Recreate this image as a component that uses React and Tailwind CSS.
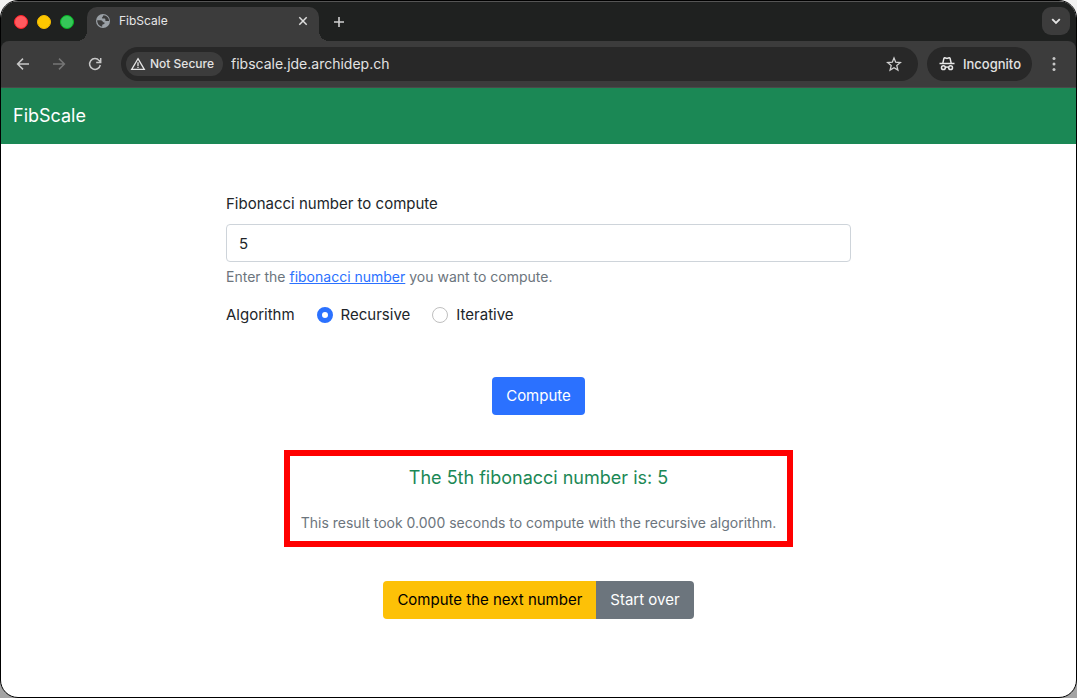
// src/App.jsx
import { useState } from 'react';

const ICON_BUTTON = 'flex items-center justify-center shrink-0 text-[#c7c7c7]';

function GlobeIcon() {
  return (
    <svg className="h-4 w-4 shrink-0" viewBox="0 0 16 16" fill="none">
      <circle cx="8" cy="8" r="7" fill="#9aa0a6" />
      <path d="M8.6 2.3c-.9.5-.4 1.5-1.3 2-.6.4-.2 1.3.5 1.3h1.8c.8 0 .9.9.7 1.4-.2.6.4 1 1.1 1h2.7a5.8 5.8 0 0 0-5.5-5.700z" fill="#3c3c3c" />
      <path d="M2.2 7.3h3.600c1.300 0 2.100 1 2.100 2h1c.8 0 1 1.300.2 1.600l-1.400.5c-.6.2-.5 1.200-.5 2.300a5.800 5.800 0 0 1-5-6.400z" fill="#3c3c3c" />
    </svg>
  );
}

function CloseIcon() {
  return (
    <svg className="h-4 w-4" viewBox="0 0 16 16" fill="none" stroke="#dedede" strokeWidth={1.5}>
      <path d="M4.3 4.3l7.4 7.4M11.7 4.3l-7.4 7.4" />
    </svg>
  );
}

function PlusIcon() {
  return (
    <svg className="h-4 w-4" viewBox="0 0 16 16" fill="none" stroke="#d0d0d0" strokeWidth={1.6}>
      <path d="M8 3v10M3 8h10" />
    </svg>
  );
}

function ChevronIcon() {
  return (
    <svg className="h-4 w-4" viewBox="0 0 16 16" fill="none" stroke="#e3e3e3" strokeWidth={1.9}>
      <path d="M4.2 6.2L8 10l3.8-3.8" />
    </svg>
  );
}

function ArrowIcon({ className }) {
  return (
    <svg className={className} viewBox="0 0 16 16" fill="none" stroke="currentColor" strokeWidth={1.5}>
      <path d="M14 8H3M8 2.6L2.6 8 8 13.4" />
    </svg>
  );
}

function ReloadIcon() {
  return (
    <svg className="h-4 w-4" viewBox="0 0 16 16" fill="none" stroke="currentColor" strokeWidth={1.5}>
      <path d="M13.3 9A5.4 5.4 0 1 1 12.2 4.6l1.3 1.5" />
      <path d="M13.700 2v4.500H9.200" />
    </svg>
  );
}

function WarningIcon() {
  return (
    <svg className="h-4 w-4 shrink-0" viewBox="0 0 16 16" fill="none" stroke="#e3e3e3" strokeWidth={1.3}>
      <path d="M8 2.7L14.3 13.300H1.700z" />
      <path d="M8 6.300v3.600M8 10.700v1.300" />
    </svg>
  );
}

function StarIcon() {
  return (
    <svg className="h-4 w-4" viewBox="0 0 16 16" fill="none" stroke="#d0d0d0" strokeWidth={1.3}>
      <path d="M8 1.900l1.700 4.300 4.700.4-3.600 3 1.100 4.500L8 11.700l-3.900 2.400 1.100-4.500-3.600-3 4.700-.4z" />
    </svg>
  );
}

function IncognitoIcon() {
  return (
    <svg className="h-4 w-4 shrink-0" viewBox="0 0 16 16" fill="none" stroke="#e8e8e8" strokeWidth={1.5}>
      <path d="M.5 7.500h15" />
      <path d="M3.800 7.300l1.100-5c.1-.5.500-.6.900-.5L8 2.400l2.200-.6c.4-.1.800 0 .9.500l1.100 5" />
      <circle cx="4.400" cy="11.700" r="1.900" />
      <circle cx="11.600" cy="11.700" r="1.900" />
      <path d="M6.300 11.400c1-.6 2.400-.6 3.400 0" />
    </svg>
  );
}

function MenuIcon() {
  return (
    <svg className="h-4 w-4" viewBox="0 0 16 16" fill="#c7c7c7">
      <circle cx="8" cy="2.500" r="1.500" />
      <circle cx="8" cy="8" r="1.500" />
      <circle cx="8" cy="13.500" r="1.500" />
    </svg>
  );
}

function TabStrip() {
  return (
    <div className="flex h-[39px] bg-[#1f2120]">
      <div className="flex items-center gap-[9px] px-[13px]">
        <span className="h-3.5 w-3.5 rounded-full bg-[#ff5a5f] border border-[#ff1f26]" />
        <span className="h-3.5 w-3.5 rounded-full bg-[#fdc700] border border-[#f5bd00]" />
        <span className="h-3.5 w-3.5 rounded-full bg-[#35c759] border border-[#06b522]" />
      </div>
      {/* Active tab */}
      <div className="relative mt-[5px] flex h-[34px] w-[232px] items-center rounded-t-[10px] bg-[#3c3c3c] px-2 pb-1.5">
        <span className="absolute -left-2.5 bottom-0 h-2.5 w-2.5 bg-[radial-gradient(circle_at_0_0,transparent_10px,#3c3c3c_10px)]" />
        <span className="absolute -right-2.5 bottom-0 h-2.5 w-2.5 bg-[radial-gradient(circle_at_100%_0,transparent_10px,#3c3c3c_10px)]" />
        <GlobeIcon />
        <span className="ml-2 flex-1 text-xs text-[#e6e6e6]">FibScale</span>
        <button type="button" aria-label="Close tab" className={ICON_BUTTON}>
          <CloseIcon />
        </button>
      </div>
      <button type="button" aria-label="New tab" className="ml-3 flex items-center">
        <PlusIcon />
      </button>
      <button type="button" aria-label="Search tabs" className="ml-auto mr-1.5 mt-[5px] flex h-7 w-7 items-center justify-center rounded-[9px] bg-[#3c3c3c]">
        <ChevronIcon />
      </button>
    </div>
  );
}

function Toolbar() {
  return (
    <div className="bg-[#1f2120]">
      <div className="flex h-[47px] items-center rounded-t-lg border-b border-[#4a4a4a] bg-[#3c3c3c] px-3.5">
        <div className="flex gap-5">
          <button type="button" aria-label="Back" className={ICON_BUTTON}>
            <ArrowIcon className="h-4 w-4" />
          </button>
          <button type="button" aria-label="Forward" className="text-[#757575]">
            <ArrowIcon className="h-4 w-4 rotate-180" />
          </button>
          <button type="button" aria-label="Reload" className={ICON_BUTTON}>
            <ReloadIcon />
          </button>
        </div>
        <div className="ml-[18px] flex h-[34px] flex-1 items-center rounded-full bg-[#282828] pl-[5px] pr-4">
          <button type="button" className="flex h-6 shrink-0 items-center gap-1 rounded-full bg-[#3c3c3c] pl-1 pr-[9px] text-xs font-medium text-[#e3e3e3]">
            <WarningIcon />
            Not Secure
          </button>
          <input
            type="text"
            aria-label="Address"
            defaultValue="fibscale.jde.archidep.ch"
            className="ml-2 min-w-0 flex-1 bg-transparent text-sm text-[#e3e3e3] outline-none"
          />
          <button type="button" aria-label="Bookmark this page" className={ICON_BUTTON}>
            <StarIcon />
          </button>
        </div>
        <button type="button" className="ml-[9px] flex h-[34px] items-center gap-2 rounded-full bg-[#282828] pl-3 pr-[11px] text-[13px] font-medium text-[#e3e3e3]">
          <IncognitoIcon />
          Incognito
        </button>
        <button type="button" aria-label="Menu" className="ml-3.5">
          <MenuIcon />
        </button>
      </div>
    </div>
  );
}

function Radio({ id, label, checked, onChange }) {
  return (
    <div className="flex items-center gap-2">
      <input
        type="radio"
        name="algorithm"
        id={id}
        checked={checked}
        onChange={onChange}
        className="h-4 w-4 appearance-none rounded-full border border-[#bfbfbf] bg-white checked:border-5 checked:border-[#2b71ff]"
      />
      <label htmlFor={id}>{label}</label>
    </div>
  );
}

export default function App() {
  const [number, setNumber] = useState('5');
  const [algorithm, setAlgorithm] = useState('recursive');

  return (
    <div className="flex min-h-screen flex-col bg-linear-to-b from-[#f2f2f2] to-[#a3a3a3] font-['Inter',sans-serif] text-[15px] leading-6 text-[#212529]">
      <div className="flex flex-1 flex-col overflow-hidden rounded-[18px] border border-black bg-white">
        <div className="border-t border-[#555] bg-[#1f2120]">
          <TabStrip />
        </div>
        <Toolbar />

        <nav className="flex h-14 items-center bg-[#1b8855] px-3">
          <a href="#" className="text-lg text-white">FibScale</a>
        </nav>

        <main className="mx-auto flex w-full max-w-[625px] flex-col pt-12">
          <form onSubmit={(e) => e.preventDefault()}>
            <label htmlFor="number" className="mb-2 block">Fibonacci number to compute</label>
            <input
              type="text"
              id="number"
              value={number}
              onChange={(e) => setNumber(e.target.value)}
              className="block h-[38px] w-full rounded border border-[#ced4da] bg-white px-3 outline-none"
            />
            <p className="mt-1 text-sm leading-[21px] text-[#6c757d]">
              Enter the <a href="#" className="text-[#2b71ff] underline">fibonacci number</a> you want to compute.
            </p>

            <div className="mt-4 flex gap-[22px]">
              <span>Algorithm</span>
              <Radio id="recursive" label="Recursive" checked={algorithm === 'recursive'} onChange={() => setAlgorithm('recursive')} />
              <Radio id="iterative" label="Iterative" checked={algorithm === 'iterative'} onChange={() => setAlgorithm('iterative')} />
            </div>

            <div className="mt-[50px] text-center">
              <button type="submit" className="block mx-auto h-[38px] rounded bg-[#2b71ff] px-3.5 text-white">Compute</button>
            </div>
          </form>

          {/* Result */}
          <div className="mt-[35px] self-center border-6 border-[#ff0000] px-[11px] py-2 text-center">
            <p className="text-lg text-[#1b8855]">The 5th fibonacci number is: 5</p>
            <p className="mt-5 text-sm leading-[21px] text-[#6c757d]">
              This result took 0.000 seconds to compute with the recursive algorithm.
            </p>
          </div>

          <div className="mt-[34px] flex justify-center">
            <button type="button" className="h-[38px] rounded-l bg-[#fdc107] px-3.5 text-black">Compute the next number</button>
            <button type="button" className="h-[38px] rounded-r bg-[#6c757d] px-3.5 text-white">Start over</button>
          </div>
        </main>
      </div>
    </div>
  );
}
